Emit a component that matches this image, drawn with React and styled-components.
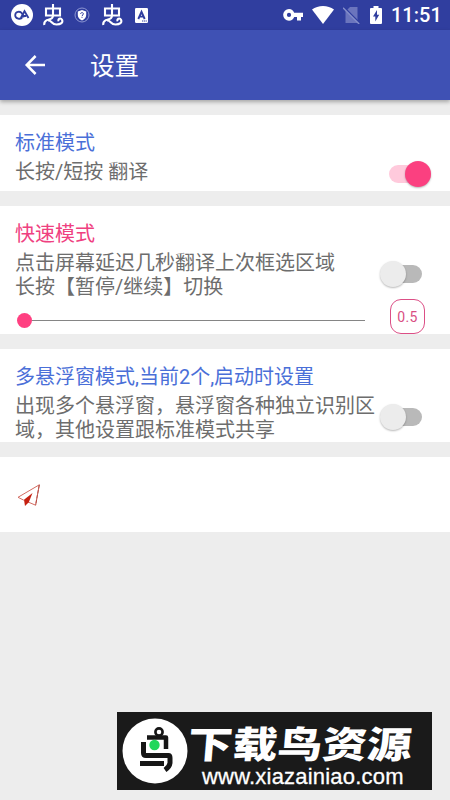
import React from 'react'
import styled, { createGlobalStyle } from 'styled-components'

const GlobalStyle = createGlobalStyle`
  * {
    box-sizing: border-box;
  }
  body {
    margin: 0;
    background: #ededed;
    font-family: Roboto, 'Noto Sans CJK SC', sans-serif;
  }
`

const Screen = styled.div`
  display: flex;
  flex-direction: column;
  width: 450px;
  height: 800px;
  overflow: hidden;
  background: #ededed;
`

const StatusBar = styled.div`
  display: flex;
  flex: none;
  align-items: center;
  justify-content: space-between;
  height: 30px;
  padding: 0 10px 0 11px;
  background: #303e9f;
  color: #fff;
`

const StatusGroup = styled.div`
  display: flex;
  align-items: center;
  gap: ${({ $gap }) => $gap};
  height: 30px;

  svg {
    display: block;
    flex: none;
  }
`

const Clock = styled.span`
  width: 49px;
  font-size: 20px;
  font-weight: 500;
  line-height: 32px;
  text-align: right;
  white-space: nowrap;
`

const Toolbar = styled.header`
  display: flex;
  flex: none;
  align-items: center;
  height: 70px;
  padding: 0 20px 0 20px;
  background: #3f51b4;
  box-shadow: 0 2px 4px rgba(0, 0, 0, 0.3);
  color: #fff;
`

const BackButton = styled.button`
  display: block;
  width: 30px;
  height: 30px;
  padding: 0;
  border: none;
  background: none;
  color: inherit;
`

const PageTitle = styled.h1`
  margin: 3px 0 0 40px;
  font-size: 24.5px;
  font-weight: 400;
  line-height: 34px;
`

const Content = styled.main`
  display: flex;
  flex: 1;
  flex-direction: column;
  gap: 15px;
  padding-top: 15px;
`

const Card = styled.section`
  display: flex;
  flex: none;
  flex-direction: column;
  height: ${({ $height }) => $height};
  padding: 14px 15px 0 15px;
  background: #fff;
`

const CardTitle = styled.h2`
  margin: 0;
  color: ${({ $accent }) => ($accent ? '#ef4080' : '#4a6fd8')};
  font-size: 20px;
  font-weight: 400;
  line-height: 28px;
  white-space: nowrap;
`

const Row = styled.div`
  display: flex;
  align-items: center;
  justify-content: space-between;
  margin: 0 4px 0 ${({ $indent }) => $indent || '0'};
  padding-top: ${({ $top }) => $top || '4px'};
`

const Description = styled.p`
  flex: none;
  margin: 0;
  color: #6d6d6d;
  font-size: 20px;
  line-height: 23.5px;
  white-space: nowrap;
`

const Switch = styled.div`
  display: flex;
  flex: none;
  align-items: center;
  justify-content: ${({ $on }) => ($on ? 'flex-end' : 'flex-start')};
  width: 42px;
  height: 18px;
  margin: ${({ $on }) => ($on ? '2px 0 0' : '0 9px 4px -10px')};
  border-radius: 9px;
  background: linear-gradient(
    to right,
    ${({ $on }) => ($on ? '#ffcadc, #ffcadc' : 'transparent 10px, #b9b9b9 10px')}
  );
`

const Thumb = styled.span`
  flex: none;
  width: 26px;
  height: 26px;
  border-radius: 50%;
  background: ${({ $on }) => ($on ? '#fb4080' : '#ececec')};
  box-shadow: 0 1px 2px rgba(0, 0, 0, 0.28);
`

const SliderRow = styled.div`
  display: flex;
  align-items: center;
  justify-content: space-between;
  margin: 0 10px 0 2px;
`

const Slider = styled.div`
  display: flex;
  align-items: center;
  width: 348px;
  height: 16px;
  margin-top: 7px;
`

const SliderThumb = styled.span`
  width: 15px;
  height: 15px;
  border-radius: 50%;
  background: #ff4081;
`

const SliderTrack = styled.span`
  flex: 1;
  height: 1px;
  background: #858585;
`

const Delay = styled.div`
  width: 35px;
  height: 35px;
  border: 1.4px solid #dc4f86;
  border-radius: 11px;
  color: #d94f83;
  font-size: 14px;
  line-height: 35px;
  letter-spacing: 0.3px;
  text-align: center;
`

const Watermark = styled.div`
  display: flex;
  flex: none;
  align-items: center;
  align-self: flex-start;
  width: 315px;
  height: 78px;
  margin: auto 0 10px 117px;
  padding-left: 5px;
  background: #1a1a1a;
  color: #fff;
`

const SiteText = styled.div`
  display: flex;
  flex-direction: column;
  padding-top: 12px;
`

const SiteName = styled.span`
  height: 39px;
  font-family: 'Noto Sans CJK SC', sans-serif;
  font-size: 37px;
  font-weight: 900;
  line-height: 34px;
  white-space: nowrap;
  transform: scaleX(1.21) skewX(-4deg);
  transform-origin: left center;
`

const SiteUrl = styled.span`
  margin-left: 14px;
  font-family: 'Liberation Sans', sans-serif;
  font-size: 22px;
  line-height: 26px;
  letter-spacing: 0.2px;
  white-space: nowrap;
  -webkit-text-stroke: 0.3px #fff;
`

const RoundLogo = () => (
  <svg width="22" height="22" viewBox="0 0 22 22" fill="none">
    <circle cx="11" cy="11" r="11" fill="#fff" />
    <path d="M11.4 13.3C9.8 15.7 4.2 15 4.2 11.2C4.2 7.3 9.2 6.8 11 9.4L13.3 13.2" stroke="#303e9f" strokeWidth="1.8" />
    <path d="M9.8 14L13.5 7.2L17.5 14M11.4 12H15.2" stroke="#303e9f" strokeWidth="1.8" />
  </svg>
)

const WormIcon = () => (
  <svg width="21" height="22" viewBox="0 0 21 22" fill="none" stroke="#fff" strokeWidth="2.1">
    <path d="M3 4.5H17V11.5H3ZM10 0V11.5C10 16 6 15 3.8 16.2C1.6 17.4 1 19 1.3 21" />
    <path d="M5 16.5C9 16 8.2 20.5 13.5 20.5C18 20.5 20.3 18.5 19 15.7C17.8 13.4 14.2 15 15.8 17.2" />
  </svg>
)

const ShieldIcon = () => (
  <svg width="16" height="16" viewBox="0 0 16 16" fill="none">
    <circle cx="8" cy="8" r="7" stroke="#8d96d2" strokeWidth="1" />
    <path d="M8 3L12.2 4.5V8C12.2 10.7 10.5 12.5 8 13.4C5.5 12.5 3.8 10.7 3.8 8V4.5Z" fill="#fff" />
    <path d="M6.6 6.8C6.6 5.2 9.5 5.2 9.4 6.9C9.3 8 8 8 8 9.2M8 10.2V11" stroke="#303e9f" strokeWidth="1" />
  </svg>
)

const LetterIcon = () => (
  <svg width="13" height="15" viewBox="0 0 13 15">
    <rect width="13" height="15" rx="1.2" fill="#fff" />
    <path d="M3.3 11L6.5 3.8L9.7 11M4.5 8.6H8.5" fill="none" stroke="#303e9f" strokeWidth="1.9" />
    <path d="M7 13H12" stroke="#303e9f" strokeDasharray="1.2 0.6" />
  </svg>
)

const KeyIcon = () => (
  <svg width="20" height="12" viewBox="0 0 20 12">
    <path fill="#fff" fillRule="evenodd" d="M6 0C8.5 0 10.3 1.4 11.2 3.7H20V8H18V11.5H14V8H11.2C10.3 10.3 8.5 11.7 6 11.7A5.85 5.85 0 0 1 6 0ZM6 3.8A2.1 2.1 0 1 0 6 8A2.1 2.1 0 0 0 6 3.8Z" />
  </svg>
)

const WifiIcon = () => (
  <svg width="22" height="18" viewBox="0 0 22 18">
    <path fill="#fff" d="M0 3.6C6-1.2 16-1.2 22 3.6L11 18Z" />
  </svg>
)

const NoSimIcon = () => (
  <svg width="18" height="18" viewBox="0 0 18 18">
    <path fill="#6b75bd" d="M7 1H14.5V17H2.5V5.5Z" />
    <path d="M1.2 1.8L17.4 18" stroke="#303e9f" strokeWidth="2" />
    <path d="M0 1.8L16.2 18" stroke="#8790cb" strokeWidth="1.4" />
  </svg>
)

const BatteryIcon = () => (
  <svg width="12" height="18" viewBox="0 0 12 18">
    <path fill="#fff" d="M3.5 0H8.5V2H11Q12 2 12 3V17Q12 18 11 18H1Q0 18 0 17V3Q0 2 1 2H3.5Z" />
    <path fill="#303e9f" d="M7 4L3 10.5H5.3V15.5L9.2 8.7H7Z" />
  </svg>
)

const BackArrow = () => (
  <svg width="30" height="30" viewBox="0 0 30 30" fill="none" stroke="currentColor" strokeWidth="2.5">
    <path d="M25 15H7.5M15.6 6L6.7 15L15.6 24" />
  </svg>
)

const PaperPlane = () => (
  <svg width="24" height="23" viewBox="0 0 24 23" fill="none">
    <path d="M22.3 .8L1 13.3L6.8 16.2M22.3 .8L18.6 21.2L11.5 18.2" stroke="#d36c62" strokeWidth="1" />
    <path d="M22.3 .8L18.6 21.2" stroke="#b34a42" strokeWidth="1" strokeDasharray="4 1" />
    <path fill="#c52010" d="M15.5 9L7 15.8L8 22L11.8 18.2Z" />
  </svg>
)

const BirdLogo = () => (
  <svg width="66" height="66" viewBox="0 0 66 66" fill="none">
    <circle cx="33" cy="33" r="32.5" fill="#fff" />
    <circle cx="37" cy="14" r="3.6" stroke="#161616" strokeWidth="2.6" />
    <path d="M25 19.5H44V31" stroke="#161616" strokeWidth="4.5" strokeLinejoin="round" />
    <path d="M21.5 24V35Q21.5 37.5 24 37.5H46.5Q48 37.5 48 40V45Q47.5 49 43 52" stroke="#161616" strokeWidth="5" strokeLinejoin="round" />
    <path d="M18 45.5H42" stroke="#161616" strokeWidth="5" />
    <circle cx="32.5" cy="27" r="5.2" fill="#20d75b" />
  </svg>
)

const Toggle = ({ on }) => (
  <Switch $on={on} role="switch" aria-checked={!!on}>
    <Thumb $on={on} />
  </Switch>
)

const App = () => (
  <Screen>
    <GlobalStyle />
    <StatusBar>
      <StatusGroup $gap="12px">
        <StatusGroup $gap="10px">
          <RoundLogo />
          <WormIcon />
          <ShieldIcon />
        </StatusGroup>
        <WormIcon />
        <LetterIcon />
      </StatusGroup>
      <StatusGroup $gap="9px">
        <KeyIcon />
        <WifiIcon />
        <NoSimIcon />
        <BatteryIcon />
        <Clock>11:51</Clock>
      </StatusGroup>
    </StatusBar>
    <Toolbar>
      <BackButton>
        <BackArrow />
      </BackButton>
      <PageTitle>设置</PageTitle>
    </Toolbar>
    <Content>
      <Card $height="76px">
        <CardTitle>标准模式</CardTitle>
        <Row>
          <Description>长按/短按 翻译</Description>
          <Toggle on />
        </Row>
      </Card>
      <Card $height="128px">
        <CardTitle $accent>快速模式</CardTitle>
        <Row>
          <Description>
            点击屏幕延迟几秒翻译上次框选区域
            <br />
            长按【暂停/继续】切换
          </Description>
          <Toggle />
        </Row>
        <SliderRow>
          <Slider>
            <SliderThumb />
            <SliderTrack />
          </Slider>
          <Delay>0.5</Delay>
        </SliderRow>
      </Card>
      <Card $height="93px">
        <CardTitle>多悬浮窗模式,当前2个,启动时设置</CardTitle>
        <Row>
          <Description>
            出现多个悬浮窗，悬浮窗各种独立识别区
            <br />
            域，其他设置跟标准模式共享
          </Description>
          <Toggle />
        </Row>
      </Card>
      <Card $height="75px">
        <Row $top="13px" $indent="2px">
          <PaperPlane />
        </Row>
      </Card>
      <Watermark>
        <BirdLogo />
        <SiteText>
          <SiteName>下载鸟资源</SiteName>
          <SiteUrl>www.xiazainiao.com</SiteUrl>
        </SiteText>
      </Watermark>
    </Content>
  </Screen>
)

export default App
